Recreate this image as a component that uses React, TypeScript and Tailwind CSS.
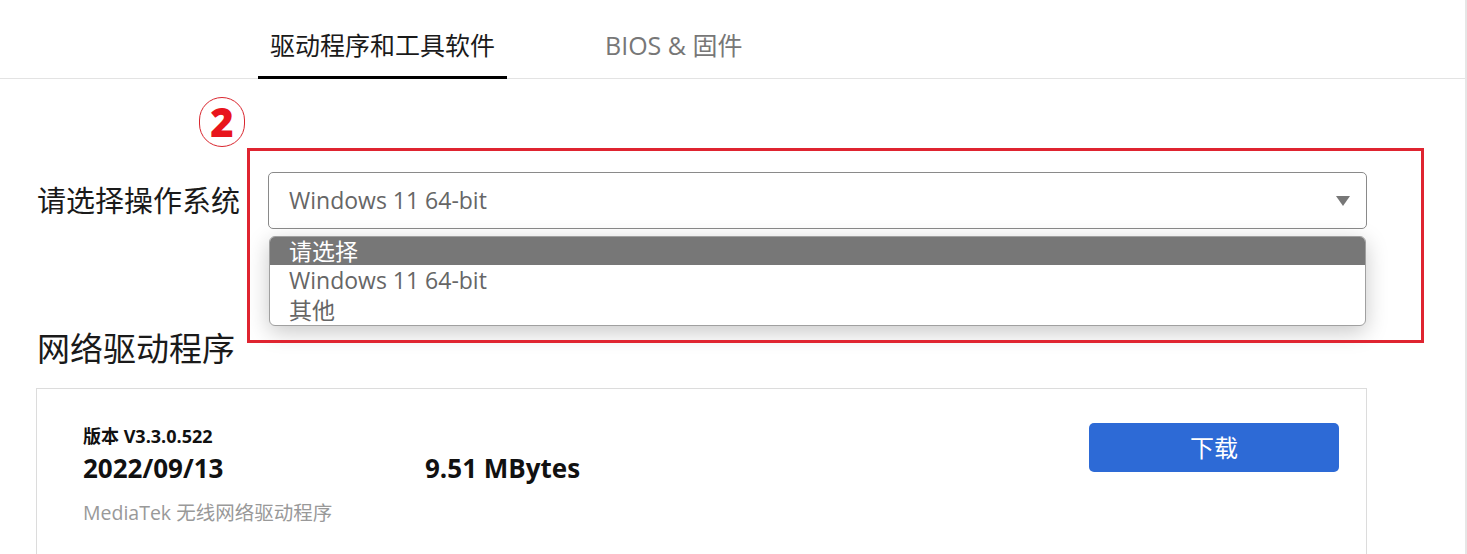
const font = "font-['Open_Sans','Noto_Sans_CJK_SC',sans-serif]";

function Tabs() {
  return (
    <div className="flex h-[79px] items-stretch border-b border-[#e3e3e3] pl-[258px]">
      <div className="relative flex w-[249px] items-center justify-center pt-[14px] text-[25px] text-[#1a1a1a]">
        驱动程序和工具软件
        <div className="absolute bottom-[-1px] left-0 right-0 h-[3px] bg-black" />
      </div>
      <div className="ml-[86px] flex items-center px-[12px] pt-[14px] text-[25px] text-[#777]">
        BIOS &amp; 固件
      </div>
    </div>
  );
}

function OsSelect() {
  const options = ["请选择", "Windows 11 64-bit", "其他"];
  return (
    <div className="relative flex items-center pl-[37px] pt-[93px]">
      <div className="w-[231px] text-[29px] text-[#1a1a1a]">请选择操作系统</div>
      <div className="relative w-[1099px]">
        <div className="flex h-[57px] items-center justify-between rounded-[5px] border border-[#8a8a8a] pl-[20px] pr-[16px] text-[23px] text-[#666]">
          <span>Windows 11 64-bit</span>
          <svg width="14" height="10" viewBox="0 0 14 10">
            <path d="M0 0h14L7 10z" fill="#777" />
          </svg>
        </div>
        <div className="absolute left-[1px] right-[1px] top-[64px] overflow-hidden rounded-[6px] border border-[#a0a0a0] bg-white shadow-[0_6px_22px_rgba(0,0,0,0.22)]">
          {options.map((o, i) => (
            <div
              key={o}
              className={
                i === 0
                  ? "h-[28px] bg-[#777] pl-[19px] text-[23px] leading-[28px] text-white"
                  : "h-[30px] pl-[19px] text-[23px] leading-[30px] text-[#666]"
              }
            >
              {o}
            </div>
          ))}
        </div>
      </div>
      <div className="absolute left-[199px] top-[18px] flex h-[50px] w-[46px] items-center justify-center rounded-full border-[1.5px] border-[#d9262e] text-[40px] font-extrabold leading-none text-[#e8151c]">
        2
      </div>
      <div className="pointer-events-none absolute left-[247px] top-[69px] h-[195px] w-[1177px] border-[3px] border-[#df2430]" />
    </div>
  );
}

function DriverCard() {
  return (
    <div className="ml-[36px] w-[1331px] border border-b-0 border-[#dcdcdc] pl-[46px] pr-[27px] pt-[34px]">
      <div className="flex">
        <div className="w-[342px]">
          <div className="text-[18px] font-bold leading-[26px] text-[#111]">版本 V3.3.0.522</div>
          <div className="mt-[1px] text-[26px] font-bold leading-[36px] text-[#111]">2022/09/13</div>
        </div>
        <div className="mt-[27px] text-[26px] font-bold leading-[36px] text-[#111]">9.51 MBytes</div>
        <button className="ml-auto h-[49px] w-[250px] rounded-[5px] bg-[#2d6ad6] text-[24px] text-white">
          下载
        </button>
      </div>
      <div className="mt-[12px] pb-[30px] text-[19.5px] text-[#999]">MediaTek 无线网络驱动程序</div>
    </div>
  );
}

export default function App() {
  return (
    <div className={`flex h-[554px] w-[1467px] overflow-hidden bg-white ${font}`}>
      <div className="w-[1465px]">
        <Tabs />
        <OsSelect />
        <div className="pl-[37px] pt-[97px] text-[33px] leading-[46px] text-[#1a1a1a]">网络驱动程序</div>
        <div className="mt-[16px]">
          <DriverCard />
        </div>
      </div>
      <div className="w-[2px] bg-[#e6e6e6]" />
    </div>
  );
}
